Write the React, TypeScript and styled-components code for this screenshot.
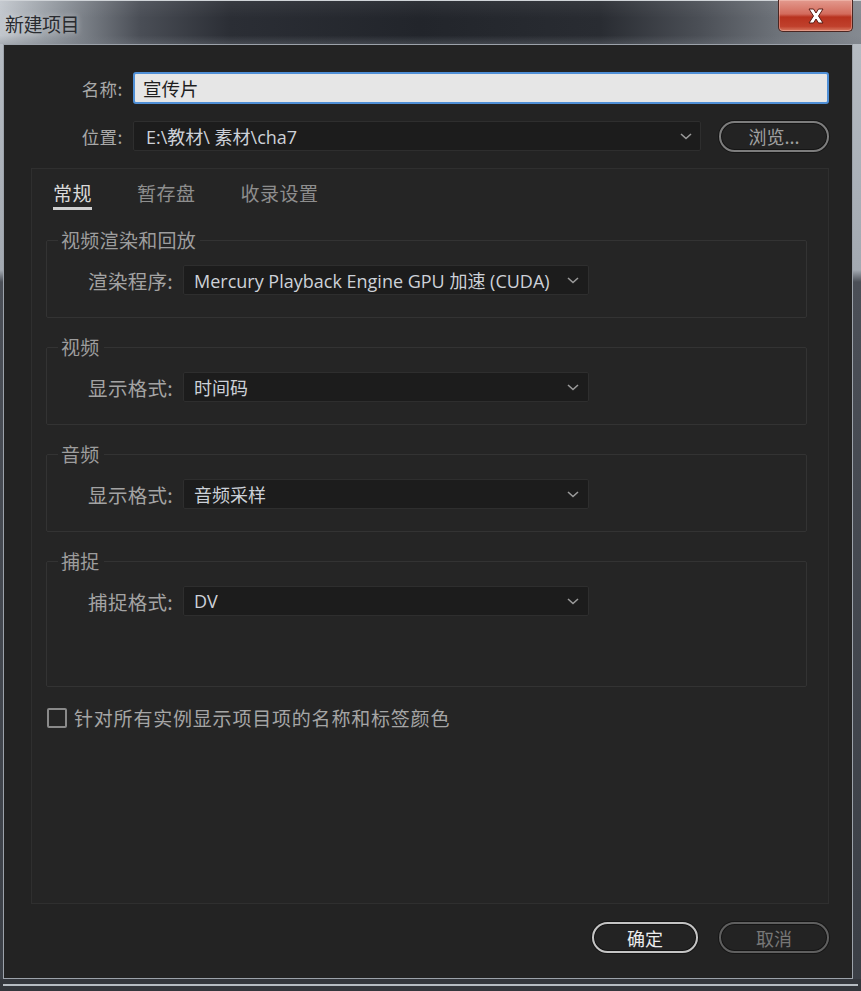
import React from "react";
import styled, { createGlobalStyle } from "styled-components";

const Global = createGlobalStyle`
  html, body { margin: 0; padding: 0; background: #2b2d32; }
  body { font-family: "Open Sans", "Noto Sans CJK SC", sans-serif; }
  * { box-sizing: border-box; }
`;

const Window = styled.div`
  width: 861px;
  height: 991px;
  display: flex;
  flex-direction: column;
  background: linear-gradient(180deg, #b9bfc6 0, #a3a9b1 270px, #4b4f57 282px, #3b3f46 100%);
`;

const TitleBar = styled.div`
  height: 44px;
  flex: none;
  display: flex;
  align-items: flex-start;
  justify-content: space-between;
  border-top: 1px solid #d0d4d8;
  background:
    linear-gradient(180deg, rgba(255,255,255,0.06) 0, rgba(0,0,0,0) 40%, rgba(0,0,0,0) 80%, rgba(120,126,134,0.35) 100%),
    linear-gradient(90deg, #c2c7cd 0, #8e949b 60px, #4a4e56 140px, #2b2e35 230px, #22252b 420px, #292c32 600px, #4b4f56 700px, #6e737a 780px, #858a91 861px);
`;

const Title = styled.div`
  margin: 10px 0 0 5px;
  font-family: "Noto Sans CJK SC", sans-serif;
  font-size: 19px;
  line-height: 26px;
  color: #2a2c30;
  letter-spacing: -0.5px;
  text-shadow: 0 0 6px rgba(255,255,255,0.55);
`;

const CloseButton = styled.div`
  width: 75px;
  height: 32px;
  margin: -1px 8px 0 0;
  display: flex;
  align-items: center;
  justify-content: center;
  border: 1px solid #4a2622;
  border-top: none;
  border-radius: 0 0 5px 5px;
  background: linear-gradient(180deg, #e39a8e 0, #d36b5c 45%, #b8321f 55%, #c0402c 85%, #d97a62 100%);
  box-shadow: inset 0 0 0 1px rgba(255,220,210,0.35);
`;

const Client = styled.div`
  flex: 1;
  margin: 0 8px 0 3px;
  border: 1px solid #9ca2aa;
  background: #232323;
  display: flex;
  flex-direction: column;
  padding: 27px 23px 25px 0;
`;

const BottomFrame = styled.div`
  height: 12px;
  flex: none;
  display: flex;
  flex-direction: column;
  justify-content: center;
  padding: 0 3px;
  background: #33363c;
  &::after {
    content: "";
    display: block;
    height: 2px;
    background: #b6bcc3;
  }
`;

const FormRow = styled.div<{ $h: number; $mt?: number }>`
  display: flex;
  align-items: center;
  height: ${(p) => p.$h}px;
  margin-top: ${(p) => p.$mt ?? 0}px;
  flex: none;
`;

const TopLabel = styled.div`
  width: 124px;
  padding-right: 5px;
  text-align: right;
  font-family: "Noto Sans CJK SC", sans-serif;
  font-size: 17.5px;
  letter-spacing: 0.5px;
  color: #a9a9a9;
  margin-right: 5px;
`;

const TextInput = styled.div`
  flex: 1;
  height: 100%;
  display: flex;
  align-items: center;
  padding-left: 8px;
  background: #e6e6e6;
  border: 2px solid #4f8fd6;
  border-radius: 3px;
  font-family: "Noto Sans CJK SC", sans-serif;
  font-size: 18.5px;
  color: #1e1e1e;
`;

const Select = styled.div<{ $w?: number; $pl?: number; $pr?: number }>`
  ${(p) => (p.$w ? `width: ${p.$w}px;` : "flex: 1;")}
  height: 30px;
  display: flex;
  align-items: center;
  justify-content: space-between;
  padding: 0 ${(p) => p.$pr ?? 9}px 0 ${(p) => p.$pl ?? 10}px;
  background: #1c1c1c;
  border: 1px solid #2e2e2e;
  border-radius: 2px;
  font-size: 18px;
  color: #cdd1d8;
  white-space: nowrap;
`;

const Chevron = () => (
  <svg width="12" height="7" viewBox="0 0 12 7">
    <polyline points="1,1 6,5.5 11,1" fill="none" stroke="#9a9a9a" strokeWidth="1.6" />
  </svg>
);

const PillButton = styled.div<{ $w: number; $tone: "bright" | "dim" | "mid" }>`
  width: ${(p) => p.$w}px;
  height: 31px;
  flex: none;
  display: flex;
  align-items: center;
  justify-content: center;
  border-radius: 16px;
  border: 2px solid
    ${(p) => (p.$tone === "bright" ? "#c4c4c4" : p.$tone === "mid" ? "#7d7d7d" : "#5f5f5f")};
  box-shadow: 0 0 0 1px #151515, inset 0 0 0 1px #151515;
  font-family: "Noto Sans CJK SC", sans-serif;
  font-size: 18px;
  color: ${(p) => (p.$tone === "bright" ? "#ececec" : p.$tone === "mid" ? "#a0a0a0" : "#777777")};
`;

const Panel = styled.div`
  flex: 1;
  margin: 17px 0 0 27px;
  border: 1px solid #2f2f2f;
  background: #252525;
  display: flex;
  flex-direction: column;
  padding: 0 21px 0 14px;
`;

const TabBar = styled.div`
  display: flex;
  gap: 45px;
  padding: 12px 0 0 7px;
`;

const Tab = styled.div<{ $active?: boolean }>`
  font-family: "Noto Sans CJK SC", sans-serif;
  font-size: 19px;
  line-height: 24px;
  letter-spacing: 0.5px;
  padding-bottom: 2px;
  color: ${(p) => (p.$active ? "#d9d9d9" : "#8e8e8e")};
  border-bottom: 3px solid ${(p) => (p.$active ? "#d0d0d0" : "transparent")};
`;

const Group = styled.fieldset<{ $pb?: number }>`
  margin: 17px 0 0 0;
  padding: 13px 0 ${(p) => p.$pb ?? 22}px 0;
  border: 1px solid #333333;
  border-radius: 2px;
  min-width: 0;
  &:first-of-type { margin-top: 18px; }
`;

const Legend = styled.legend`
  margin-left: 11px;
  padding: 0 4px 0 3px;
  font-family: "Noto Sans CJK SC", sans-serif;
  font-size: 19px;
  line-height: 24px;
  letter-spacing: 0.3px;
  color: #9d9d9d;
`;

const GroupRow = styled.div`
  display: flex;
  align-items: center;
`;

const GroupLabel = styled.div`
  width: 126px;
  text-align: right;
  margin-right: 10px;
  font-family: "Noto Sans CJK SC", sans-serif;
  font-size: 19.5px;
  letter-spacing: 0.3px;
  color: #a3a3a3;
`;

const CheckRow = styled.div`
  display: flex;
  align-items: center;
  gap: 7px;
  margin-top: 17px;
  margin-left: 1px;
`;

const CheckBox = styled.div`
  width: 20px;
  height: 20px;
  border: 2px solid #8a8a8a;
  border-radius: 2px;
`;

const CheckText = styled.div`
  font-family: "Noto Sans CJK SC", sans-serif;
  font-size: 19px;
  letter-spacing: 0.8px;
  color: #a5a5a5;
`;

const ButtonBar = styled.div`
  display: flex;
  justify-content: flex-end;
  gap: 21px;
  margin-top: 18px;
  flex: none;
`;

const Spacer = styled.div`
  width: 18px;
  flex: none;
`;

const groups: { legend: string; label: string; value: string; pb?: number }[] = [
  { legend: "视频渲染和回放", label: "渲染程序:", value: "Mercury Playback Engine GPU 加速 (CUDA)" },
  { legend: "视频", label: "显示格式:", value: "时间码" },
  { legend: "音频", label: "显示格式:", value: "音频采样" },
  { legend: "捕捉", label: "捕捉格式:", value: "DV", pb: 70 },
];

export default function App() {
  return (
    <>
      <Global />
      <Window>
        <TitleBar>
          <Title>新建项目</Title>
          <CloseButton>
            <svg width="18" height="16" viewBox="0 0 18 16">
              <path
                d="M2 1 H6.5 L9 5 L11.5 1 H16 L11.5 8 L16 15 H11.5 L9 11 L6.5 15 H2 L6.5 8 Z"
                fill="#ffffff"
                stroke="#5a1d14"
                strokeWidth="1"
                strokeLinejoin="round"
              />
            </svg>
          </CloseButton>
        </TitleBar>
        <Client>
          <FormRow $h={32}>
            <TopLabel>名称:</TopLabel>
            <TextInput>宣传片</TextInput>
          </FormRow>
          <FormRow $h={30} $mt={17}>
            <TopLabel>位置:</TopLabel>
            <Select $pl={12} $pr={8}>
              <span>E:\教材\ 素材\cha7</span>
              <Chevron />
            </Select>
            <Spacer />
            <PillButton $w={110} $tone="mid">浏览...</PillButton>
          </FormRow>
          <Panel>
            <TabBar>
              <Tab $active>常规</Tab>
              <Tab>暂存盘</Tab>
              <Tab>收录设置</Tab>
            </TabBar>
            {groups.map((g) => (
              <Group key={g.legend} $pb={g.pb}>
                <Legend>{g.legend}</Legend>
                <GroupRow>
                  <GroupLabel>{g.label}</GroupLabel>
                  <Select $w={406}>
                    <span>{g.value}</span>
                    <Chevron />
                  </Select>
                </GroupRow>
              </Group>
            ))}
            <CheckRow>
              <CheckBox />
              <CheckText>针对所有实例显示项目项的名称和标签颜色</CheckText>
            </CheckRow>
          </Panel>
          <ButtonBar>
            <PillButton $w={106} $tone="bright">确定</PillButton>
            <PillButton $w={110} $tone="dim">取消</PillButton>
          </ButtonBar>
        </Client>
        <BottomFrame />
      </Window>
    </>
  );
}
